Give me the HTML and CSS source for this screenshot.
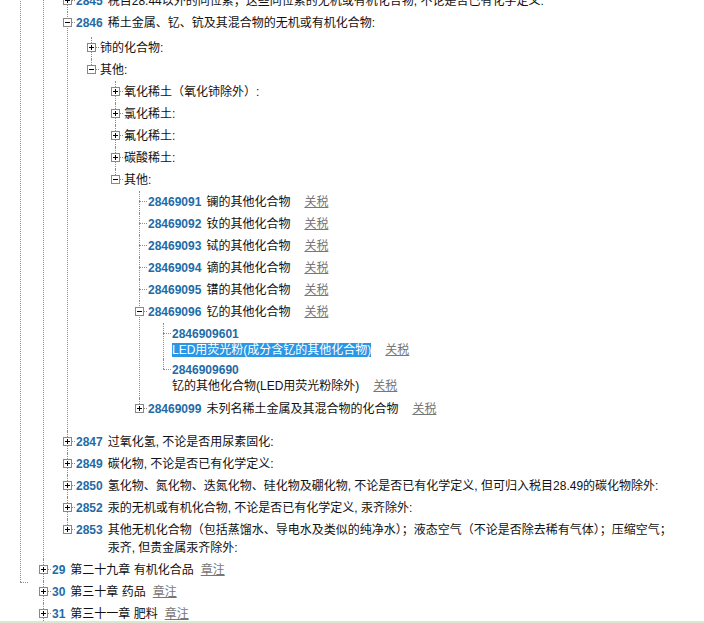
FILE: index.html
```html
<!DOCTYPE html>
<html lang="zh-CN">
<head>
    <meta charset="UTF-8">
    <meta name="viewport" content="width=device-width, initial-scale=1.0">
    <title>税则目录</title>
    <link rel="stylesheet" href="styles.css">
</head>
<body>
    <div class="page">
        <ul class="tree">
            <!-- 第二十八章 -->
            <li>
                <ul class="ch">
                    <li>
                        <div class="head"><span class="tg plus"></span><b class="code">2845</b><span class="text">税目28.44以外的同位素；这些同位素的无机或有机化合物, 不论是否已有化学定义:</span></div>
                    </li>
                    <li>
                        <div class="head"><span class="tg minus"></span><b class="code">2846</b><span class="text">稀土金属、钇、钪及其混合物的无机或有机化合物:</span></div>
                        <ul class="sub">
                            <li>
                                <div class="head"><span class="tg plus"></span><span class="text">铈的化合物:</span></div>
                            </li>
                            <li>
                                <div class="head"><span class="tg minus"></span><span class="text">其他:</span></div>
                                <ul>
                                    <li><div class="head"><span class="tg plus"></span><span class="text">氧化稀土（氧化铈除外）:</span></div></li>
                                    <li><div class="head"><span class="tg plus"></span><span class="text">氯化稀土:</span></div></li>
                                    <li><div class="head"><span class="tg plus"></span><span class="text">氟化稀土:</span></div></li>
                                    <li><div class="head"><span class="tg plus"></span><span class="text">碳酸稀土:</span></div></li>
                                    <li>
                                        <div class="head"><span class="tg minus"></span><span class="text">其他:</span></div>
                                        <ul>
                                            <li><div class="head"><span class="tg leaf"></span><b class="code">28469091</b><span class="text">镧的其他化合物<a class="tax" href="#">关税</a></span></div></li>
                                            <li><div class="head"><span class="tg leaf"></span><b class="code">28469092</b><span class="text">钕的其他化合物<a class="tax" href="#">关税</a></span></div></li>
                                            <li><div class="head"><span class="tg leaf"></span><b class="code">28469093</b><span class="text">铽的其他化合物<a class="tax" href="#">关税</a></span></div></li>
                                            <li><div class="head"><span class="tg leaf"></span><b class="code">28469094</b><span class="text">镝的其他化合物<a class="tax" href="#">关税</a></span></div></li>
                                            <li><div class="head"><span class="tg leaf"></span><b class="code">28469095</b><span class="text">镨的其他化合物<a class="tax" href="#">关税</a></span></div></li>
                                            <li>
                                                <div class="head"><span class="tg minus"></span><b class="code">28469096</b><span class="text">钇的其他化合物<a class="tax" href="#">关税</a></span></div>
                                                <ul class="leaves">
                                                    <li>
                                                        <div class="head stack"><span class="tg leaf"></span>
                                                            <div class="text"><b class="code">2846909601</b><span class="hl">LED用荧光粉(成分含钇的其他化合物)</span><a class="tax" href="#">关税</a></div>
                                                        </div>
                                                    </li>
                                                    <li>
                                                        <div class="head stack"><span class="tg leaf"></span>
                                                            <div class="text"><b class="code">2846909690</b>钇的其他化合物(LED用荧光粉除外)<a class="tax" href="#">关税</a></div>
                                                        </div>
                                                    </li>
                                                </ul>
                                            </li>
                                            <li><div class="head"><span class="tg plus"></span><b class="code">28469099</b><span class="text">未列名稀土金属及其混合物的化合物<a class="tax" href="#">关税</a></span></div></li>
                                        </ul>
                                    </li>
                                </ul>
                            </li>
                        </ul>
                    </li>
                    <li><div class="head"><span class="tg plus"></span><b class="code">2847</b><span class="text">过氧化氢, 不论是否用尿素固化:</span></div></li>
                    <li><div class="head"><span class="tg plus"></span><b class="code">2849</b><span class="text">碳化物, 不论是否已有化学定义:</span></div></li>
                    <li><div class="head"><span class="tg plus"></span><b class="code">2850</b><span class="text">氢化物、氮化物、迭氮化物、硅化物及硼化物, 不论是否已有化学定义, 但可归入税目28.49的碳化物除外:</span></div></li>
                    <li><div class="head"><span class="tg plus"></span><b class="code">2852</b><span class="text">汞的无机或有机化合物, 不论是否已有化学定义, 汞齐除外:</span></div></li>
                    <li><div class="head"><span class="tg plus"></span><b class="code">2853</b><span class="text">其他无机化合物（包括蒸馏水、导电水及类似的纯净水）；液态空气（不论是否除去稀有气体）；压缩空气；汞齐, 但贵金属汞齐除外:</span></div></li>
                </ul>
            </li>
            <li><div class="head"><span class="tg plus"></span><b class="code">29</b><span class="text">第二十九章 有机化合品<a class="note" href="#">章注</a></span></div></li>
            <li><div class="head"><span class="tg plus"></span><b class="code">30</b><span class="text">第三十章 药品<a class="note" href="#">章注</a></span></div></li>
            <li><div class="head"><span class="tg plus"></span><b class="code">31</b><span class="text">第三十一章 肥料<a class="note" href="#">章注</a></span></div></li>
            <li><div class="head"><span class="tg plus"></span><b class="code">32</b><span class="text">第三十二章 鞣料浸膏及染料浸膏; 鞣酸及其衍生物; 染料、颜料及其他着色料<a class="note" href="#">章注</a></span></div></li>
        </ul>
    </div>
    <div class="status"></div>
</body>
</html>
```

FILE: styles.css
```css
* {
    margin: 0;
    padding: 0;
    box-sizing: border-box;
}

html,
body {
    height: 100%;
    overflow: hidden;
}

body {
    font-family: "Liberation Sans", "Noto Sans CJK SC", sans-serif;
    font-size: 12px;
    color: #111;
    background: #fff;
}

.page {
    position: relative;
    margin-top: -10px;
    padding: 0 24px 0 39px;
}

/* outer section line */
.page::before {
    content: "";
    position: absolute;
    left: 20px;
    top: 0;
    height: 592px;
    border-left: 1px dotted #8c8c8c;
}

.page::after {
    content: "";
    position: absolute;
    left: 20px;
    top: 592px;
    width: 8px;
    border-top: 1px dotted #8c8c8c;
}

.tree,
.tree ul {
    list-style: none;
}

.tree ul {
    padding-left: 24px;
}

.tree ul.sub {
    padding-top: 3px;
    padding-bottom: 11px;
}

.tree ul.leaves {
    padding-bottom: 3px;
}

.tree li {
    position: relative;
}

/* vertical sibling line */
.tree li::before {
    content: "";
    position: absolute;
    left: 4px;
    top: 0;
    bottom: 0;
    border-left: 1px dotted #8c8c8c;
}

.tree li:last-child::before {
    bottom: auto;
    height: 10px;
}

.head {
    position: relative;
    display: flex;
    align-items: flex-start;
    padding: 2px 0;
    line-height: 18px;
}

/* horizontal connector */
.head::before {
    content: "";
    position: absolute;
    left: 4px;
    top: 10px;
    width: 8px;
    border-top: 1px dotted #8c8c8c;
}

.tg {
    position: relative;
    z-index: 1;
    flex: 0 0 9px;
    height: 9px;
    margin: 4px 4px 0 0;
    border: 1px solid #888;
    background: #fff;
}

.tg::before,
.tg::after {
    content: "";
    position: absolute;
    background: #000;
}

.tg::before {
    left: 1px;
    top: 3px;
    width: 5px;
    height: 1px;
}

.tg.plus::after {
    left: 3px;
    top: 1px;
    width: 1px;
    height: 5px;
}

.tg.leaf {
    visibility: hidden;
}

.code {
    flex: none;
    font-weight: bold;
    color: #1f6ba6;
    margin-right: 5px;
}

.text {
    flex: 1;
    min-width: 0;
}

.head.stack {
    padding: 3px 0 1px;
    line-height: 16px;
}

.head.stack .code {
    display: block;
    margin-right: 0;
}

.hl {
    background: #2a96e6;
    color: #fff;
}

.tax,
.note {
    color: #777;
    text-decoration: underline;
}

.tax {
    margin-left: 14px;
}

.note {
    margin-left: 7px;
}

.status {
    position: fixed;
    left: 0;
    right: 0;
    bottom: 0;
    height: 2px;
    background: #d8e9d0;
}
```
